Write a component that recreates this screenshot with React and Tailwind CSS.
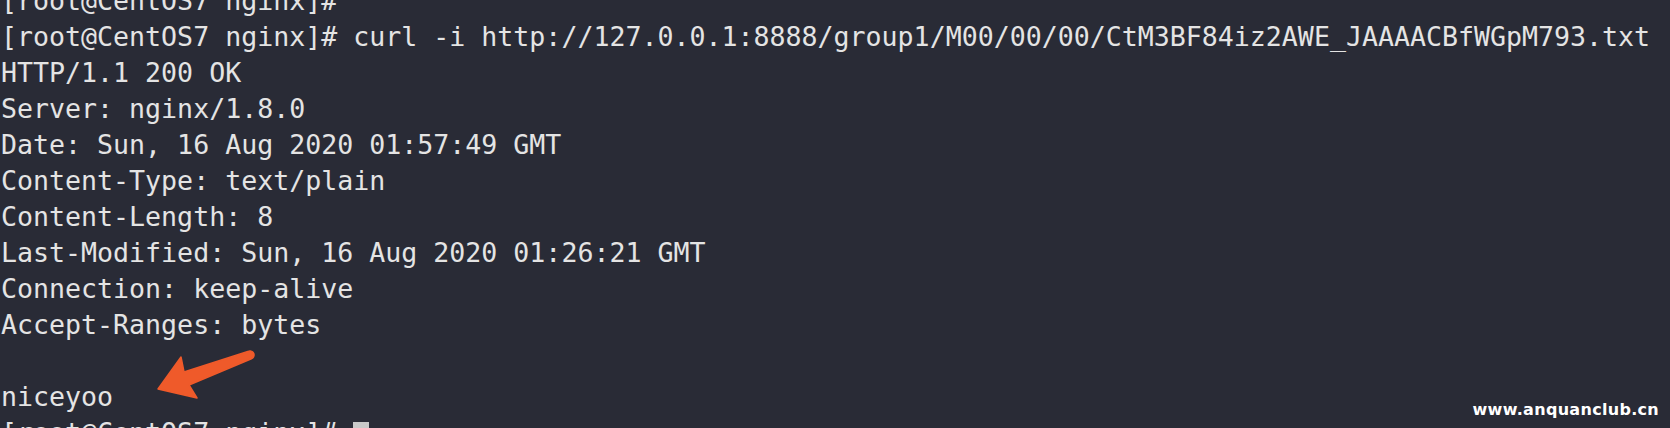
const lines = [
  '[root@CentOS7 nginx]#',
  '[root@CentOS7 nginx]# curl -i http://127.0.0.1:8888/group1/M00/00/00/CtM3BF84iz2AWE_JAAAACBfWGpM793.txt',
  'HTTP/1.1 200 OK',
  'Server: nginx/1.8.0',
  'Date: Sun, 16 Aug 2020 01:57:49 GMT',
  'Content-Type: text/plain',
  'Content-Length: 8',
  'Last-Modified: Sun, 16 Aug 2020 01:26:21 GMT',
  'Connection: keep-alive',
  'Accept-Ranges: bytes',
  '',
  'niceyoo',
]

function Arrow() {
  return (
    <svg className="absolute left-[150px] top-[345px]" width="110" height="60" viewBox="150 345 110 60">
      <path
        d="M158 389 L181 357 L184 372 L248.6 351.2 A4 4 0 0 1 251.4 358.8 L189 385 L197 398 Z"
        fill="#ef5a2a"
        stroke="#ef5a2a"
        strokeWidth="1.5"
        strokeLinejoin="round"
      />
    </svg>
  )
}

export default function App() {
  return (
    <div className="relative w-[1670px] h-[428px] overflow-hidden bg-[#292b36] text-[#e4e4e4]">
      <div className="-mt-[17px] pl-[1px] font-['DejaVu_Sans_Mono',monospace] text-[26.6px] leading-[36px] whitespace-pre">
        {lines.map((l, i) => (
          <div key={i} className="h-[36px]">{l}</div>
        ))}
        <div className="flex h-[36px] items-center">
          <span>[root@CentOS7 nginx]# </span>
          <span className="mt-[8px] h-[30px] w-[16px] bg-[#c9c9c9]" />
        </div>
      </div>
      <Arrow />
      <div className="absolute right-[11px] top-[398px] font-['DejaVu_Sans',sans-serif] text-[16px] font-bold tracking-[0.3px] text-white">
        www.anquanclub.cn
      </div>
    </div>
  )
}
